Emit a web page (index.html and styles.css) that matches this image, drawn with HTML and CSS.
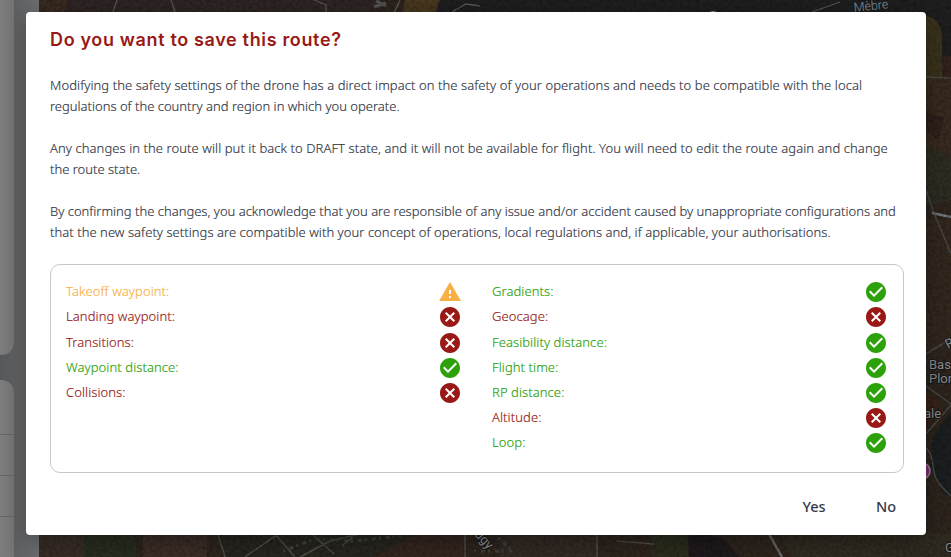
FILE: index.html
```html
<!DOCTYPE html>
<html lang="en">
<head>
    <meta charset="UTF-8">
    <meta name="viewport" content="width=device-width, initial-scale=1.0">
    <title>Save route</title>
    <link rel="stylesheet" href="styles.css">
</head>
<body>
    <!-- Map behind the dialog -->
    <svg class="map" width="951" height="557" viewBox="0 0 951 557" aria-hidden="true">
        <defs>
            <filter id="grain" x="0" y="0" width="100%" height="100%">
                <feTurbulence type="fractalNoise" baseFrequency="0.3" numOctaves="3" seed="4"/>
                <feColorMatrix values="0 0 0 0 0  0 0 0 0 0  0 0 0 0 0  0 1.6 0 0 -0.5"/>
            </filter>
            <linearGradient id="side" x1="0" x2="1">
                <stop offset="0" stop-color="#555759"/>
                <stop offset="1" stop-color="#6c6d6f"/>
            </linearGradient>
            <linearGradient id="card" x1="0" x2="1">
                <stop offset="0" stop-color="#7d7d7d"/>
                <stop offset="1" stop-color="#747474"/>
            </linearGradient>
        </defs>
        <rect width="951" height="557" fill="#2f261e"/>
        <!-- top strip -->
        <path fill="#3a2c22" d="M39 0h29l-4 14H39z"/>
        <path fill="#302726" d="M68 0h305v14H64z"/>
        <path fill="#4a3a20" d="M405 0h50l-15 14h-38z"/>
        <path fill="#202021" d="M440 0h511v60h-25V14H435z"/>
        <path fill="none" stroke="#5a5a58" stroke-width="1.3" d="M117 0l-4 12M171 0l4 12M314 0l12 5v8M400 0l-6 13M452 12l14-8 14 2M812 12l28-10"/>
        <path fill="none" stroke="#57595b" stroke-width="3" d="M374 7l12-4M376 1l10 5"/>
        <circle cx="713" cy="17" r="6" fill="#8c8c8c"/>
        <!-- right strip -->
        <path fill="#3c341d" d="M926 16c8 1 16 8 16 20v42h-16z"/>
        <path fill="#34231d" d="M943 56h8v22h-9z"/>
        <path fill="#392c21" d="M926 78h25v78l-25-8z"/>
        <path fill="#30221b" d="M926 112l18 6-5 22-13-9z"/>
        <path fill="#302e23" d="M926 148l25 8v44l-25 6z"/>
        <path fill="#34291f" d="M926 220h25v130h-25z"/>
        <path fill="#3b2419" d="M926 392l15 12-15 24z"/>
        <path fill="#1d2021" d="M951 412l-18 23-3 30 14 30h7z"/>
        <path fill="none" stroke="#4a4947" stroke-width="1.5" d="M926 77l25 1M926 190l6 18 19 46M926 354l25-15M926 386l25 18M951 405l-25 29M926 448q6 5 7 18t9 21l9 9"/>
        <path fill="none" stroke="#73777a" stroke-width="2.5" d="M932 213l19 4"/>
        <!-- bottom strip -->
        <path fill="#3a2f28" d="M39 534h45v23H39z"/>
        <path fill="#2a2f20" d="M84 534h52v23H84z"/>
        <path fill="#3d2f28" d="M143 534h64v23h-64z"/>
        <path fill="#282720" d="M218 534h247l-88 23H225z"/>
        <path fill="#362720" d="M416 534h50v23h-93z"/>
        <path fill="#342b25" d="M500 534h97v23h-97z"/>
        <path fill="#2d2e1e" d="M652 534h36v23h-36z"/>
        <path fill="#201b1c" d="M688 536q20-5 38 5l13 16h-50z"/>
        <path fill="#312d22" d="M780 534h171v23H792z"/>
        <path fill="none" stroke="#4e4d49" stroke-width="1.6" d="M218 534l7 23M245 557l33-23M275 534l20 23M300 557l30-16 30-7M312 534l22 20M465 534v23M597 534v23M342 546l14-12M616 541l38 3"/>
        <path fill="none" stroke="#6c6c69" stroke-width="2.5" d="M769 534l13 23"/>
        <path fill="none" stroke="#42433f" stroke-width="3" stroke-dasharray="2 5 4 3" d="M283 551l32-12 36 2 50-5M474 551h38M498 538l14 12"/>
        <rect width="951" height="557" filter="url(#grain)" opacity=".3"/>
        <circle cx="922" cy="471" r="8" fill="#752c69" stroke="#94808f" stroke-width="1.5"/>
        <g class="map-label">
            <text x="854" y="12" class="river" textLength="35" transform="rotate(-6 854 12)">Mèbre</text>
            <text x="929" y="369">Bas</text>
            <text x="929" y="383">Plon</text>
            <text x="924" y="418">ale</text>
            <text x="948" y="349" transform="rotate(-28 948 349)">R</text>
            <text x="945" y="552">G</text>
            <text x="474" y="535" transform="rotate(47 474 535)">ugy</text>
        </g>
        <!-- side panel -->
        <rect width="39" height="557" fill="url(#side)"/>
        <path fill="url(#card)" d="M0 0h14v341q0 14-14 14zM0 380q14 0 14 15v162H0z"/>
        <path stroke="#646464" d="M0 434.500h14M0 475.500h14M0 516.500h14"/>
    </svg>

    <svg class="symbols" aria-hidden="true">
        <symbol id="ok" viewBox="0 0 24 24"><path d="M12 2C6.480 2 2 6.480 2 12s4.480 10 10 10 10-4.480 10-10S17.520 2 12 2zm-2 15l-5-5 1.410-1.410L10 14.170l7.590-7.590L19 8l-9 9z"/></symbol>
        <symbol id="error" viewBox="0 0 24 24"><path d="M12 2C6.470 2 2 6.470 2 12s4.470 10 10 10 10-4.470 10-10S17.530 2 12 2zm5 13.590L15.590 17 12 13.410 8.410 17 7 15.590 10.590 12 7 8.410 8.410 7 12 10.590 15.590 7 17 8.410 13.410 12 17 15.590z"/></symbol>
        <symbol id="warning" viewBox="0 0 24 24"><path d="M1 21h22L12 2 1 21zm12-3h-2v-2h2v2zm0-4h-2v-4h2v4z"/></symbol>
    </svg>

    <div class="dialog" role="dialog">
        <h1>Do you want to save this route?</h1>
        <div class="message">
            <p><span class="wide">Modifying the safety settings of the drone has a direct impact on the safety of your operations and needs to be compatible with the local</span><br>
            regulations of the country and region in which you operate.</p>
            <p><span class="wide">Any changes in the route will put it back to DRAFT state, and it will not be available for flight. You will need to edit the route again and change</span><br>
            the route state.</p>
            <p>By confirming the changes, you acknowledge that you are responsible of any issue and/or accident caused by unappropriate configurations and<br>
            <span class="medium">that the new safety settings are compatible with your concept of operations, local regulations and, if applicable, your authorisations.</span></p>
        </div>

        <div class="checks">
            <ul>
                <li class="warning"><span>Takeoff waypoint:</span><svg><use href="#warning"/></svg></li>
                <li class="error"><span>Landing waypoint:</span><svg><use href="#error"/></svg></li>
                <li class="error"><span>Transitions:</span><svg><use href="#error"/></svg></li>
                <li class="ok"><span>Waypoint distance:</span><svg><use href="#ok"/></svg></li>
                <li class="error"><span>Collisions:</span><svg><use href="#error"/></svg></li>
            </ul>
            <ul>
                <li class="ok"><span>Gradients:</span><svg><use href="#ok"/></svg></li>
                <li class="error"><span>Geocage:</span><svg><use href="#error"/></svg></li>
                <li class="ok"><span>Feasibility distance:</span><svg><use href="#ok"/></svg></li>
                <li class="ok"><span>Flight time:</span><svg><use href="#ok"/></svg></li>
                <li class="ok"><span>RP distance:</span><svg><use href="#ok"/></svg></li>
                <li class="error"><span>Altitude:</span><svg><use href="#error"/></svg></li>
                <li class="ok"><span>Loop:</span><svg><use href="#ok"/></svg></li>
            </ul>
        </div>

        <div class="actions">
            <button type="button">Yes</button>
            <button type="button">No</button>
        </div>
    </div>
</body>
</html>
```
FILE: styles.css
```css
* {
    box-sizing: border-box;
}
body {
    margin: 0;
    height: 557px;
    padding: 12px 25px 22px 26px;
    overflow: hidden;
    font-family: "Noto Sans", sans-serif;
    color: #303443;
}
.map {
    position: absolute;
    top: 0;
    left: 0;
}
.map-label {
    font: 13px Roboto, sans-serif;
    fill: #888;
    stroke: #171717;
    stroke-width: 2px;
    paint-order: stroke;
}
.map-label .river {
    fill: #66737c;
}
.symbols {
    display: none;
}
.dialog {
    position: relative;
    height: 523px;
    padding: 14px 22px 0 24px;
    background: #fff;
    border-radius: 4px;
    box-shadow: 0 6px 20px rgba(0, 0, 0, .3);
}
h1 {
    margin: 0;
    font: 600 18px/28px Inter, sans-serif;
    letter-spacing: .65px;
    color: #981915;
    white-space: nowrap;
}
.message {
    padding-top: 21px;
    font-size: 13px;
    font-weight: 300;
    line-height: 21px;
    white-space: nowrap;
    -webkit-text-stroke: .15px;
}
.message p {
    margin: 0 0 21px;
}
.wide {
    letter-spacing: .077px;
}
.medium {
    letter-spacing: .05px;
}
.checks {
    display: grid;
    grid-template-columns: 1fr 1fr;
    height: 209px;
    padding-top: 14.660px;
    border: 1px solid #c8c8c8;
    border-radius: 10px;
}
ul {
    margin: 0;
    padding: 0 15px;
    list-style: none;
}
li {
    display: flex;
    align-items: center;
    justify-content: space-between;
    height: 25.170px;
    font-size: 13px;
    font-weight: 300;
    letter-spacing: .08px;
}
li span {
    padding-bottom: 2px;
    -webkit-text-stroke: .15px;
}
li svg {
    width: 24px;
    height: 24px;
    fill: currentColor;
}
.ok {
    color: #2ca10a;
}
.error {
    color: #981915;
}
.warning {
    color: #f9b043;
}
.actions {
    display: flex;
    justify-content: flex-end;
    margin-right: -18px;
    padding-top: 15px;
}
button {
    width: 72px;
    height: 36px;
    padding: 0;
    border: 0;
    background: none;
    font: 500 14.500px "Noto Sans", sans-serif;
    color: #363a4a;
}
```
